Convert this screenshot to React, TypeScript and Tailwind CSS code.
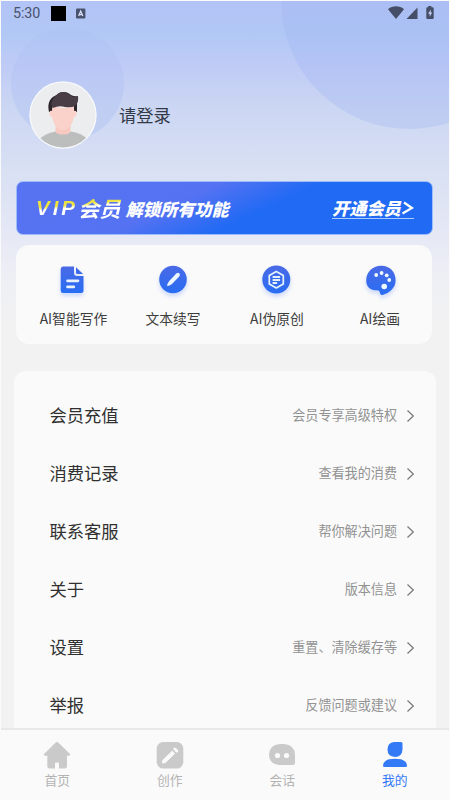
import React from 'react';

const rows = [
  ['会员充值', '会员专享高级特权'],
  ['消费记录', '查看我的消费'],
  ['联系客服', '帮你解决问题'],
  ['关于', '版本信息'],
  ['设置', '重置、清除缓存等'],
  ['举报', '反馈问题或建议'],
];

function StatusBar() {
  return (
    <div className="relative flex h-[24px] flex-none items-center pl-[12px] pr-[14px] text-[#49536d]">
      <span className="w-[38px] font-['Roboto'] text-[14.3px] leading-none tracking-[-0.1px]">5:30</span>
      <span className="h-[15px] w-[15px] bg-black" />
      <svg className="ml-[10px]" width="10" height="11" viewBox="0 0 10 11">
        <rect x="0" y="0.5" width="9.4" height="10" rx="1.2" fill="#49536d" />
        <path d="M2.6 8 4.7 3l2.1 5M3.3 6.6h2.8" stroke="#dce3fb" strokeWidth="1.2" fill="none" />
      </svg>
      <svg className="ml-auto -mt-[2px]" width="48" height="15" viewBox="0 0 48 15">
        <path d="M1 4.2C5.5.4 12.500.4 17 4.200L9 14Z" fill="#454e66" />
        <path d="M30.500 2.500V14H19.500Z" fill="#454e66" />
        <path d="M41.200 1h3.200v1.300h1.300q1 0 1 1V13q0 1-1 1h-5.400q-1 0-1-1V3.300q0-1 1-1h.9Z" fill="#454e66" />
        <path d="M43.800 4.400 41.100 8.800h1.600v3l2.500-4.400h-1.500Z" fill="#c4d1f7" />
      </svg>
    </div>
  );
}

function Avatar() {
  return (
    <svg width="68" height="68" viewBox="0 0 68 68">
      <defs>
        <clipPath id="face"><circle cx="34" cy="34" r="32.500" /></clipPath>
      </defs>
      <circle cx="34" cy="34" r="33.700" fill="#f8fafc" />
      <circle cx="34" cy="34" r="32.500" fill="#ecedef" />
      <g clipPath="url(#face)">
        <path d="M9 60Q15 52 27 50.500H42Q54 52 60 60V68H8Z" fill="#bcbdbd" />
        <path d="M26.500 42H41.500V50Q41 53.500 34 53.500T26.500 50Z" fill="#f7c9c0" />
        <path d="M20 31C18 22 21 16 28 14C31 10 38 10 42 14Q46 16 49 15Q49 18 48 20L48 31H45L43 23H24L23 31Z" fill="#2c252b" />
        <path d="M24 25Q35 29 45 25V30Q48 29 47.500 33Q47 36 45 36Q43 48 34 49Q25 48 23 36Q20.500 36 20.500 33Q20 29 23 30Z" fill="#fbd2ca" />
        <path d="M22 23C24 17 28 11 34 11Q39 11 42 15Q46 17 49 15Q50 22 46 25Q42 27 36 26Q30 24 24 27Z" fill="#493e46" />
      </g>
    </svg>
  );
}

function FeatureIcon({ kind }: { kind: string }) {
  return (
    <svg className="drop-shadow-[0_3px_2px_rgba(73,118,255,0.25)]" width="32" height="32" viewBox="0 0 32 32">
      <defs>
        <linearGradient id={`blue-${kind}`} x1="0" y1="0" x2="0" y2="1">
          <stop stopColor="#4a6ae6" /><stop offset="1" stopColor="#286df3" />
        </linearGradient>
      </defs>
      {kind === 'doc' && (
        <g transform="translate(-1.500 0)">
          <path d="M6.600 2.500H17.500V9Q17.500 12 20.500 12H27V26.500Q27 29 24.500 29H6.600Q4.200 29 4.200 26.500V5Q4.200 2.500 6.600 2.500Z" fill="url(#blue-doc)" />
          <path d="M19.500 3.300 26.600 10H21Q19.500 10 19.500 8.500Z" fill="#3e69e8" />
          <path d="M11 16.800H21.500M11 22.900H17.300" stroke="#e9f2ff" strokeWidth="2.700" strokeLinecap="round" />
        </g>
      )}
      {kind === 'pen' && (
        <g>
          <circle cx="16" cy="15.500" r="13.800" fill="url(#blue-pen)" />
          <path d="M19.300 9.500Q20.900 8 22.300 9.400T22.200 12.500L15 20Q13.500 21.500 10.200 22.200Q10.100 19.600 12.200 17Z" fill="#eef6ff" />
        </g>
      )}
      {kind === 'hex' && (
        <g transform="translate(-0.700 0)">
          <circle cx="16" cy="15.500" r="14" fill="url(#blue-hex)" />
          <path d="M16 7.500 23 11.500V20L16 24 9 20V11.500Z" fill="none" stroke="#e8f4ff" strokeWidth="1.700" strokeLinejoin="round" />
          <path d="M12.300 13H19.800M12.300 16H19.800M12.300 19H16.800" stroke="#e2efff" strokeWidth="1.900" />
        </g>
      )}
      {kind === 'palette' && (
        <g transform="translate(1 0)">
          <path d="M16 1.700C25 1.500 30.800 8 30.600 16.500C30.500 24 24.500 29 17.500 31C15.500 31.500 15.200 29.500 14.500 27.500C13.500 25.500 11 26.500 8.500 26C3.500 25 1.200 21 1.200 16.500C1.200 8 7.500 1.900 16 1.700Z" fill="url(#blue-palette)" />
          <g fill="#effaff">
            <circle cx="11.200" cy="11" r="1.900" /><circle cx="16.600" cy="9" r="1.900" />
            <circle cx="21.700" cy="11.300" r="1.900" /><circle cx="24.200" cy="16" r="1.900" />
            <circle cx="19.200" cy="22.500" r="2.800" />
          </g>
        </g>
      )}
    </svg>
  );
}

function Feature({ kind, label, className }: { kind: string; label: string; className: string }) {
  return (
    <div className={`flex flex-col items-center ${className}`}>
      <FeatureIcon kind={kind} />
      <span className="mt-[12px] whitespace-nowrap text-[13.8px] leading-[20px] text-[#3d3d3d]">{label}</span>
    </div>
  );
}

function TabIcon({ kind }: { kind: string }) {
  return (
    <svg width="28" height="28" viewBox="0 0 28 28">
      {kind === 'home' && (
        <path d="M13 1.300Q14 .5 15 1.300L27 13Q27.700 14.600 26 14.800H24V25Q24 27.500 21.500 27.500H16V22.500Q16 21.500 15 21.500H13Q12 21.500 12 22.500V27.500H6.500Q4.300 27.500 4.300 25V14.800H2Q.3 14.600 1 13Z" fill="#cacaca" />
      )}
      {kind === 'create' && (
        <g>
          <rect x="0.700" y="1" width="26.600" height="26.600" rx="6.500" fill="#cacaca" />
          <path d="M16.200 10.200 18.600 12.600 9.600 21.300Q8 22.300 6.500 21.900Q6.200 20.300 7.100 19Z" fill="#fafafa" stroke="#fafafa" strokeLinejoin="round" />
          <path d="M18.800 8 20.800 10" stroke="#fafafa" strokeWidth="3" strokeLinecap="round" />
        </g>
      )}
      {kind === 'chat' && (
        <g>
          <path d="M12 3H16Q27 4 27 14V22Q27 24 25 24H11Q1 23 1 13.500Q1 4 12 3Z" fill="#cacaca" />
          <circle cx="9.500" cy="14.500" r="2.600" fill="#fafafa" /><circle cx="18.500" cy="14.500" r="2.600" fill="#fafafa" />
        </g>
      )}
      {kind === 'me' && (
        <g fill="#3479f6">
          <path d="M13 1H20Q21.500 1 21.500 2.500V8.500Q21 16 14 16Q6.500 15.500 6.500 8.500Q6.500 1.500 13 1Z" />
          <path d="M8 18.300Q14 17 20 18.300Q26 20.500 26 24.500Q26 26 24.500 26H3.500Q2 26 2 24.500Q2.300 20 8 18.300Z" />
        </g>
      )}
    </svg>
  );
}

export default function App() {
  return (
    <div className="flex h-[800px] w-[450px] flex-col overflow-hidden border-x border-t border-[#fafafa] bg-[#f2f2f2] font-['Noto_Sans_CJK_SC',sans-serif]">
      <div className="relative flex h-[727px] flex-none flex-col overflow-hidden bg-[linear-gradient(180deg,#b3c3f6_0px,#b1c8f5_32px,#c0cbf6_66px,#cbd6f3_105px,#d8e0f3_168px,#e4e7f5_225px,#eeeff5_275px,#f2f2f2_330px)]">
        <div className="absolute left-[10px] top-[26px] h-[113px] w-[113px] rounded-full bg-[linear-gradient(180deg,#7398ef08,#7398ef30)]" />
        <div className="absolute left-[280px] top-[-129px] h-[257px] w-[257px] rounded-full bg-[#9db2f3]/30" />
        <StatusBar />

        <div className="relative ml-[28px] mt-[56px] flex h-[67px] flex-none items-center">
          <Avatar />
          <span className="ml-[22px] text-[17.3px] leading-[24px] text-[#333a47]">请登录</span>
        </div>

        <div className="relative ml-[15px] mt-[33px] flex h-[54px] w-[417px] flex-none items-center rounded-[7px] border border-[#9dbcfb] bg-[linear-gradient(155deg,#5873f2_0%,#5472f2_39%,#216af4_58%,#216af4_100%)] pl-[19px] pr-[18px] font-bold text-white">
          <span className="flex h-[30px] items-center whitespace-nowrap bg-[linear-gradient(175deg,#eee23f_0%,#eee23f_39%,#ffffff_48%)] bg-clip-text pr-[4px] text-[21.3px] italic leading-[30px] text-transparent">
            <span className="w-[42px] font-['Liberation_Sans'] text-[20.5px] tracking-[3px]">VIP</span>会员
          </span>
          <span className="ml-[1px] mt-[2px] text-[17.2px] font-black italic leading-[26px]">解锁所有功能</span>
          <span className="ml-auto mt-[1px] flex h-[20px] w-[82px] items-center whitespace-nowrap border-b border-[#a9cbff] text-[17.2px] font-black italic leading-[20px]">
            开通会员
            <svg width="13" height="16" viewBox="0 0 13 16"><path d="M3 2.500 11 8 1.500 13.500" stroke="white" strokeWidth="2.200" fill="none" /></svg>
          </span>
        </div>

        <div className="ml-[15px] mt-[10px] flex h-[99px] w-[416px] flex-none rounded-[13px] bg-[#fafafa] pl-[6px] pt-[19px]">
          <Feature kind="doc" label="AI智能写作" className="w-[103px]" />
          <Feature kind="pen" label="文本续写" className="w-[96px]" />
          <Feature kind="hex" label="AI伪原创" className="w-[112px]" />
          <Feature kind="palette" label="AI绘画" className="w-[94px]" />
        </div>

        <div className="ml-[13px] mt-[27px] h-[400px] w-[422px] flex-none rounded-t-[12px] bg-[#fafafa] pl-[20px] pr-[21px] pt-[15px]">
          {rows.map(([title, hint]) => (
            <div key={title} className="flex h-[58px] items-center pl-[15.5px]">
              <span className="text-[17.3px] leading-[24px] text-[#303030]">{title}</span>
              <span className="ml-auto text-[13.1px] leading-[20px] text-[#929292]">{hint}</span>
              <svg className="ml-[9px] mt-[1px]" width="9" height="14" viewBox="0 0 9 14">
                <path d="m1.500 1.500 5.800 5.500-5.800 5.500" fill="none" stroke="#777" strokeWidth="1.200" />
              </svg>
            </div>
          ))}
        </div>
      </div>

      <nav className="grid h-[72px] w-[450px] flex-none grid-cols-4 border-t-2 border-[#e8e8e8] bg-[#fafafa]">
        {[
          ['home', '首页'],
          ['create', '创作'],
          ['chat', '会话'],
          ['me', '我的'],
        ].map(([kind, label]) => (
          <div key={kind} className={`flex flex-col items-center pt-[11px] text-[12.8px] leading-[18px] ${kind === 'me' ? 'text-[#3479f6]' : 'text-[#b3b3b3]'}`}>
            <TabIcon kind={kind} />
            <span className="mt-[2px]">{label}</span>
          </div>
        ))}
      </nav>
    </div>
  );
}
